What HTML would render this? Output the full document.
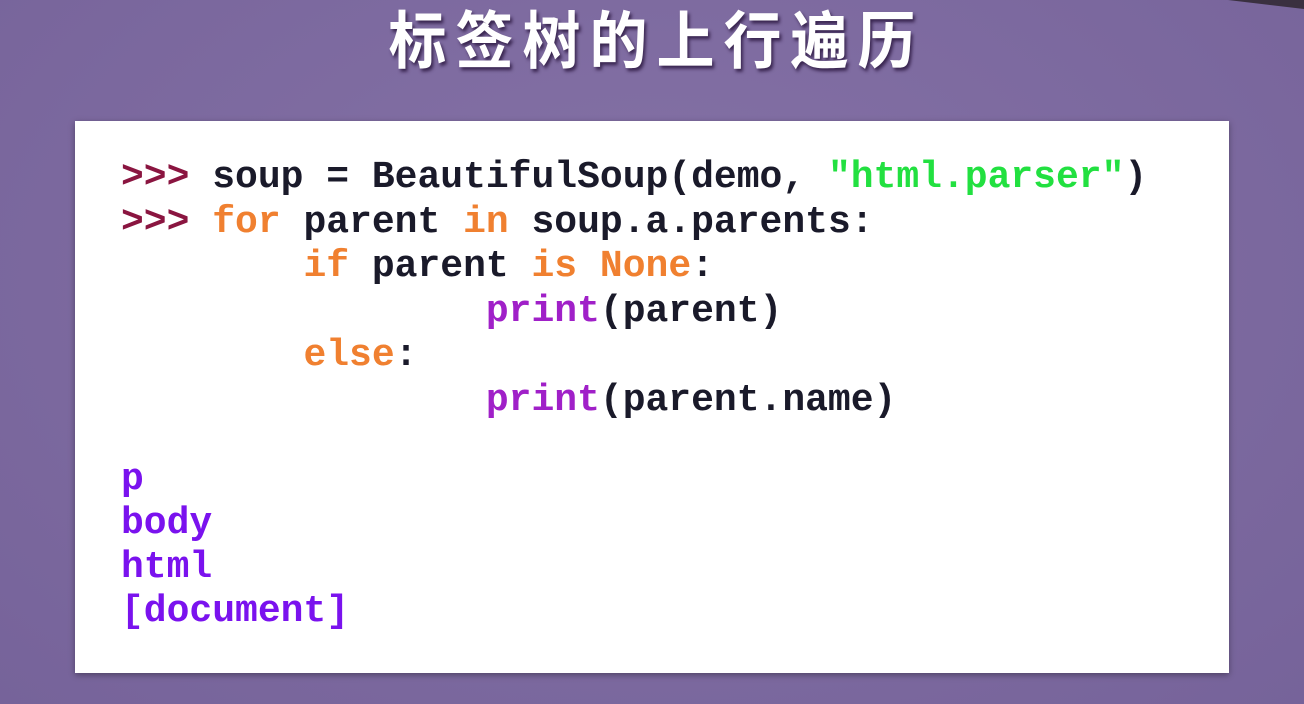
<!DOCTYPE html>
<html><head><meta charset="utf-8"><style>
html,body{margin:0;padding:0}
body{width:1304px;height:704px;overflow:hidden;background:#7d6a9e;position:relative;background-image:radial-gradient(ellipse at 50% 40%,#8572a6,#76639a)}
.tri{position:absolute;right:0;top:0;width:0;height:0;border-left:76px solid transparent;border-top:9px solid #3a3040}
h1{position:absolute;left:0;width:1304px;top:0px;margin:0;text-align:center;font:bold 58px/72px "Noto Sans CJK SC",sans-serif;color:#fff;letter-spacing:9px;text-indent:9px;text-shadow:2px 3px 3px rgba(40,20,60,.8);transform:scaleY(1.08)}
.card{position:absolute;left:75px;top:121px;width:1154px;height:552px;background:#fff;box-shadow:0 2px 6px rgba(0,0,0,.35)}
pre{position:absolute;left:121px;margin:0;font:bold 38px/44.5px "Liberation Mono",monospace;color:#1a1a2a}
.p{color:#8a1540}.k{color:#f08030}.f{color:#a020c8}.s{color:#22e040}.o{color:#7a12ee}
</style></head><body>
<div class="tri"></div>
<h1>标签树的上行遍历</h1>
<div class="card"></div>
<pre style="top:156px"><span class="p">&gt;&gt;&gt;</span> soup = BeautifulSoup(demo, <span class="s">"html.parser"</span>)
<span class="p">&gt;&gt;&gt;</span> <span class="k">for</span> parent <span class="k">in</span> soup.a.parents:
        <span class="k">if</span> parent <span class="k">is</span> <span class="k">None</span>:
                <span class="f">print</span>(parent)
        <span class="k">else</span>:
                <span class="f">print</span>(parent.name)</pre>
<pre style="top:458px;line-height:44px" class="o">p
body
html
[document]</pre>
</body></html>
